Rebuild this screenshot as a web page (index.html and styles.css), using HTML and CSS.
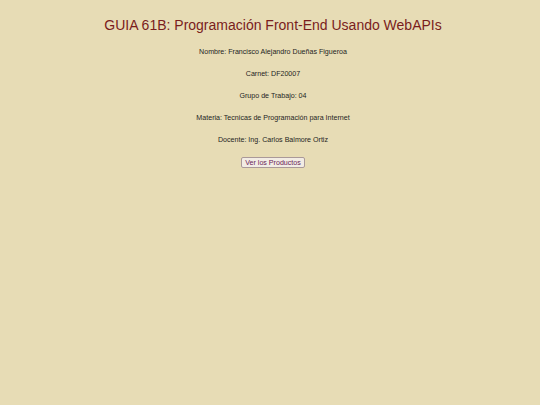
FILE: index.html
```html
<!DOCTYPE html>
<html lang="es">
<head>
<meta charset="utf-8">
<title>GUIA 61B</title>
<link rel="stylesheet" href="styles.css">
</head>
<body>
<main class="page">
  <h1 class="title">GUIA 61B: Programación Front-End Usando WebAPIs</h1>
  <p class="info">Nombre: Francisco Alejandro Dueñas Figueroa</p>
  <p class="info">Carnet: DF20007</p>
  <p class="info">Grupo de Trabajo: 04</p>
  <p class="info">Materia: Tecnicas de Programación para Internet</p>
  <p class="info last">Docente: Ing. Carlos Balmore Ortiz</p>
  <button class="btn" type="button">Ver los Productos</button>
</main>
</body>
</html>
```

FILE: styles.css
```css
html, body {
  margin: 0;
  padding: 0;
  background: #e7dcb5;
  font-family: "Liberation Sans", Arial, sans-serif;
}
.page {
  display: flex;
  flex-direction: column;
  align-items: center;
  padding: 15px 0 0 6px;
}
.title {
  margin: 0 0 13px;
  font-size: 14px;
  font-weight: normal;
  color: #7a1c1c;
  line-height: 20px;
}
.info {
  margin: 0 0 13px;
  font-size: 7.1px;
  line-height: 9px;
  color: #1e1e1e;
}
.info.last {
  margin-bottom: 12px;
}
.btn {
  margin-top: 0;
  font-family: "Liberation Sans", Arial, sans-serif;
  font-size: 7.1px;
  line-height: 8px;
  color: #6a2458;
  background: #f2ece4;
  border: 1px solid #a99;
  border-radius: 2px;
  padding: 0 3px;
  height: 11px;
}
```
